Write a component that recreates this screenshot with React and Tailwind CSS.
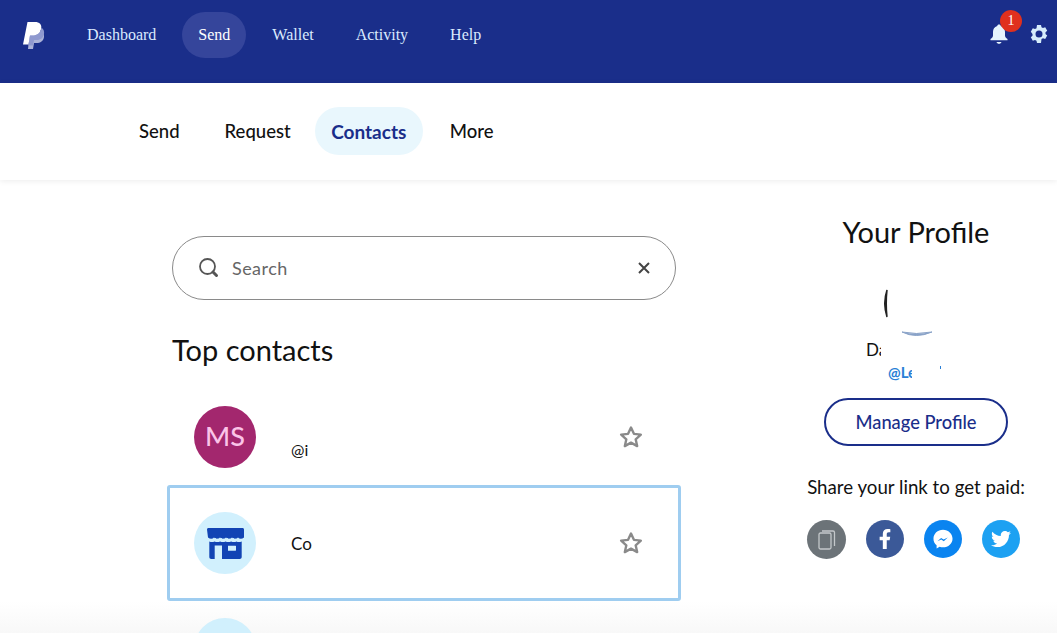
import { FaFacebookF, FaTwitter } from 'react-icons/fa';

const navItems = ['Dashboard', 'Send', 'Wallet', 'Activity', 'Help'];
const subItems = [
  { label: 'Send', gap: '' },
  { label: 'Request', gap: 'ml-[13px]' },
  { label: 'Contacts', gap: 'ml-[8px]' },
  { label: 'More', gap: 'ml-[11px]' },
];

const Logo = () => (
  <svg width="24" height="30" viewBox="0 0 24 30" className="block">
    <path d="M8 10h8c4 0 6.500 2 6 6-.6 4-3.500 6-7.500 6h-2.500l-1 6H6z" fill="#aab2d8" />
    <path d="M5.500 1h7.500c4.500 0 7 2.500 6.200 6.500C18.400 12 15 14.500 10.500 14.500H8L6.500 23.500H1z" fill="#ffffff" />
    <path d="M8 14.500h2.500c4.500 0 7.900-2.500 8.700-7 .1-.3.1-.5.1-.8 2.300 1.100 3.200 3.300 2.700 6.300-.6 3.800-3.400 6-7.300 6h-2.700l-.9 5.500H6.500z" fill="#8f99cf" />
  </svg>
);

const Bell = () => (
  <svg width="20" height="22" viewBox="0 0 20 22" className="block">
    <path d="M10 1.500c-1 0-1.700.700-1.800 1.600C5.300 3.900 4 6.300 4 9v3.500c0 1.600-1 2.600-2.500 3.500v1.300h17V16c-1.500-.9-2.500-1.900-2.500-3.500V9c0-2.700-1.300-5.100-4.200-5.900-.1-.9-.8-1.600-1.800-1.600z" fill="#e6f4fd" />
    <path d="M7.500 19h5c-.3 1.200-1.300 1.800-2.500 1.800s-2.200-.6-2.500-1.800z" fill="#e6f4fd" />
  </svg>
);

const Gear = () => (
  <svg width="20" height="20" viewBox="0 0 20 20" className="block">
    <path
      fillRule="evenodd"
      d="M8 1h4l.5 2.300 1.500.8 2.200-.8 2 3.400-1.700 1.600v1.700l1.700 1.600-2 3.400-2.200-.8-1.500.8L12 19H8l-.5-2.300-1.500-.8-2.200.8-2-3.400 1.700-1.600V10l-1.700-2.300 2-3.400 2.200.8 1.500-.8zM10 6.500a3.500 3.500 0 1 0 0 7 3.500 3.500 0 0 0 0-7z"
      fill="#d6ecfb"
    />
  </svg>
);

const Star = () => (
  <svg width="26" height="26" viewBox="0 0 24 24" className="block">
    <path
      d="M12 3.200l2.700 5.900 6.400.7-4.800 4.300 1.400 6.300L12 17.200l-5.700 3.200 1.400-6.300-4.800-4.300 6.400-.7z"
      fill="none"
      stroke="#8a8a8a"
      strokeWidth="2.200"
      strokeLinejoin="round"
    />
  </svg>
);

const StoreIcon = () => (
  <svg width="37" height="31" viewBox="0 0 37 31" className="block">
    <path d="M0 1.500C0 .6.600 0 1.500 0h34c.9 0 1.500.6 1.500 1.500V9.500c-2 1.600-4.500 1.600-6 0-1.500 1.600-4.500 1.600-6 0-1.500 1.600-4.500 1.600-6 0-1.500 1.600-4.500 1.600-6 0-1.500 1.600-4.500 1.600-6 0-1.500 1.600-4 1.600-6 0z" fill="#1244b4" />
    <path
      fillRule="evenodd"
      d="M2.300 13.500c1.500.7 3.700.7 5.200 0 1.800.8 4 .8 5.600 0 1.800.8 4 .8 5.400 0 1.800.8 4 .8 5.600 0 1.800.8 4 .8 5.400 0 1.200.7 3.200.7 5.200 0V29c0 1.100-.8 2-2 2H15V17.500H7.700V31H4.300c-1.200 0-2-.9-2-2zM21 17.700v5h7.500c.3 0 .5-.2.5-.5v-4c0-.3-.2-.5-.5-.5z"
      fill="#1244b4"
    />
  </svg>
);

const ContactRow = ({ avatar, children, selected }) => (
  <div
    className={`flex items-center justify-between rounded-[3px] pl-6 pr-[34px] border-[3px] ${
      selected ? 'h-[116px] border-[#9fcdf0]' : 'h-[97px] border-transparent'
    }`}
  >
    <div className="flex items-center gap-[35px]">
      {avatar}
      {children}
    </div>
    <Star />
  </div>
);

const App = () => {
  return (
    <div className="h-[633px] overflow-hidden bg-[linear-gradient(to_bottom,#ffffff_95%,#f8f8f8)] font-['Lato',sans-serif] text-[#111]">
      <header className="flex h-[83px] items-start justify-between bg-[#1a2e8a] pl-[22px] pr-[8px]">
        <div className="flex items-start">
          <div className="mt-[21px] mr-[25px]">
            <Logo />
          </div>
          <nav className="mt-[12px] flex items-center gap-[10px] font-['Liberation_Serif',serif] text-base text-[#dbeafe]">
            {navItems.map((item) => (
              <span
                key={item}
                className={`flex h-[46px] items-center rounded-full px-4 ${
                  item === 'Send' ? 'bg-[#35459b] text-white' : ''
                }`}
              >
                {item}
              </span>
            ))}
          </nav>
        </div>
        <div className="mt-[11px] flex items-start">
          <div className="relative mt-[12px] mr-[20px]">
            <Bell />
            <span className="absolute -top-[13px] left-[11px] flex h-[22px] w-[22px] items-center justify-center rounded-full bg-[#e0301e] font-['Liberation_Serif',serif] text-sm text-white">
              1
            </span>
          </div>
          <div className="mt-[13px]">
            <Gear />
          </div>
        </div>
      </header>

      <div className="relative flex h-[97px] items-center bg-white pb-[2px] pl-[123px] shadow-[0_1px_6px_rgba(0,0,0,0.08)]">
        {subItems.map(({ label, gap }) => (
          <span
            key={label}
            className={`flex h-12 items-center rounded-full pt-[3px] ${gap} ${
              label === 'Contacts'
                ? 'bg-[#e9f7fd] px-[16.5px] text-[19px] font-bold text-[#1a2e8a]'
                : 'px-4 text-[18.5px] font-medium'
            }`}
          >
            {label}
          </span>
        ))}
      </div>

      <main className="flex pl-[167px]">
        <section className="w-[514px]">
          <div className="mx-[5px] mt-[56px] flex h-[64px] items-center justify-between rounded-full border border-[#8a8a8a] pl-[25px] pr-[23px]">
            <div className="flex items-center gap-[12px]">
              <svg width="22" height="22" viewBox="0 0 22 22" className="block">
                <circle cx="9.500" cy="9.500" r="7.500" fill="none" stroke="#555" strokeWidth="1.800" />
                <path d="M15 15l3.500 3.500" stroke="#555" strokeWidth="3" strokeLinecap="round" />
              </svg>
              <span className="text-lg tracking-wide text-[#666]">Search</span>
            </div>
            <svg width="16" height="16" viewBox="0 0 16 16" className="block">
              <path d="M3 3l10 10M13 3L3 13" stroke="#444" strokeWidth="2" />
            </svg>
          </div>

          <h2 className="mx-[5px] mt-[31px] mb-[19px] text-[29px] leading-[38px] font-normal">Top contacts</h2>

          <ContactRow
            avatar={
              <div className="flex h-[62px] w-[62px] items-center justify-center rounded-full bg-[#a3276e] text-[27px] font-medium text-[#fbc4e8]">
                MS
              </div>
            }
          >
            <span className="mt-[26px] text-base">@i</span>
          </ContactRow>

          <ContactRow
            selected
            avatar={
              <div className="flex h-[62px] w-[62px] items-center justify-center rounded-full bg-[#d1f0fd]">
                <StoreIcon />
              </div>
            }
          >
            <span className="mt-[2px] text-[17px]">Co</span>
          </ContactRow>

          <div className="ml-[27px] mt-[17px] h-[62px] w-[62px] rounded-full bg-[#d1f0fd]" />
        </section>

        <aside className="ml-[126px] flex w-[218px] flex-col items-center">
          <h2 className="mt-[33px] text-[29px] leading-[38px] font-normal">Your Profile</h2>
          <div className="mt-[21px] h-[64px] w-[64px]">
            <svg width="64" height="64" viewBox="0 0 64 64" className="block">
              <path d="M3 18C0 27 0 36 3 45 2 36 2 27 3 18z" fill="#222" stroke="#222" strokeWidth="1.500" />
              <path d="M18 60Q32 67 48 60Q32 63 18 60z" fill="#8aa3c8" stroke="#8aa3c8" strokeWidth="1" />
            </svg>
          </div>
          <div className="mt-[4px] h-[20px] w-[100px] text-[17px] leading-[20px]">
            <span className="block w-[15px] overflow-hidden">Da</span>
          </div>
          <div className="relative mt-[2px] h-[20px] w-[100px] pl-[22px] text-[15px] leading-[20px] font-bold text-[#2a7fd6]">
            <span className="block w-[24px] overflow-hidden">@Le</span>
            <span className="absolute left-[74px] top-[4px] h-[3px] w-[1px] bg-[#2a7fd6]" />
          </div>
          <button className="mt-[16px] h-[48px] w-[184px] rounded-full border-2 border-[#1a2e8a] pt-px text-[18.3px] font-medium text-[#1a2e8a]">
            Manage Profile
          </button>
          <p className="mt-[29px] text-[18.7px] leading-6 whitespace-nowrap">Share your link to get paid:</p>
          <div className="mt-[21px] flex gap-[20px] self-start">
            <div className="flex h-[39px] w-[39px] items-center justify-center rounded-full bg-[#6c7378]">
              <svg width="18" height="20" viewBox="0 0 18 20" className="block">
                <rect x="1" y="3" width="12" height="16" rx="1.500" fill="none" stroke="#c4c8ca" strokeWidth="1.300" />
                <path d="M4 1h11a1.500 1.500 0 0 1 1.500 1.500V16" fill="none" stroke="#c4c8ca" strokeWidth="1.300" />
              </svg>
            </div>
            <div className="flex h-[38px] w-[38px] items-center justify-center rounded-full bg-[#3b5998] text-[20px] text-white">
              <FaFacebookF />
            </div>
            <div className="flex h-[38px] w-[38px] items-center justify-center rounded-full bg-[#0a84f0]">
              <svg width="26" height="26" viewBox="0 0 24 24" className="block">
                <path d="M12 3.500c-5 0-8.800 3.600-8.800 8.200 0 2.500 1.100 4.600 2.900 6.100v3l2.800-1.600c1 .3 2 .5 3.100.5 5 0 8.800-3.600 8.800-8s-3.800-8.200-8.800-8.200z" fill="#fff" />
                <path d="M6.800 14l3.500-3 2.300 1.500 3.800-2-3.700 3.500-2.300-1.500z" fill="#0a84f0" />
              </svg>
            </div>
            <div className="flex h-[38px] w-[38px] items-center justify-center rounded-full bg-[#1da1f2] text-[20px] text-white">
              <FaTwitter />
            </div>
          </div>
        </aside>
      </main>
    </div>
  );
};

export default App;
